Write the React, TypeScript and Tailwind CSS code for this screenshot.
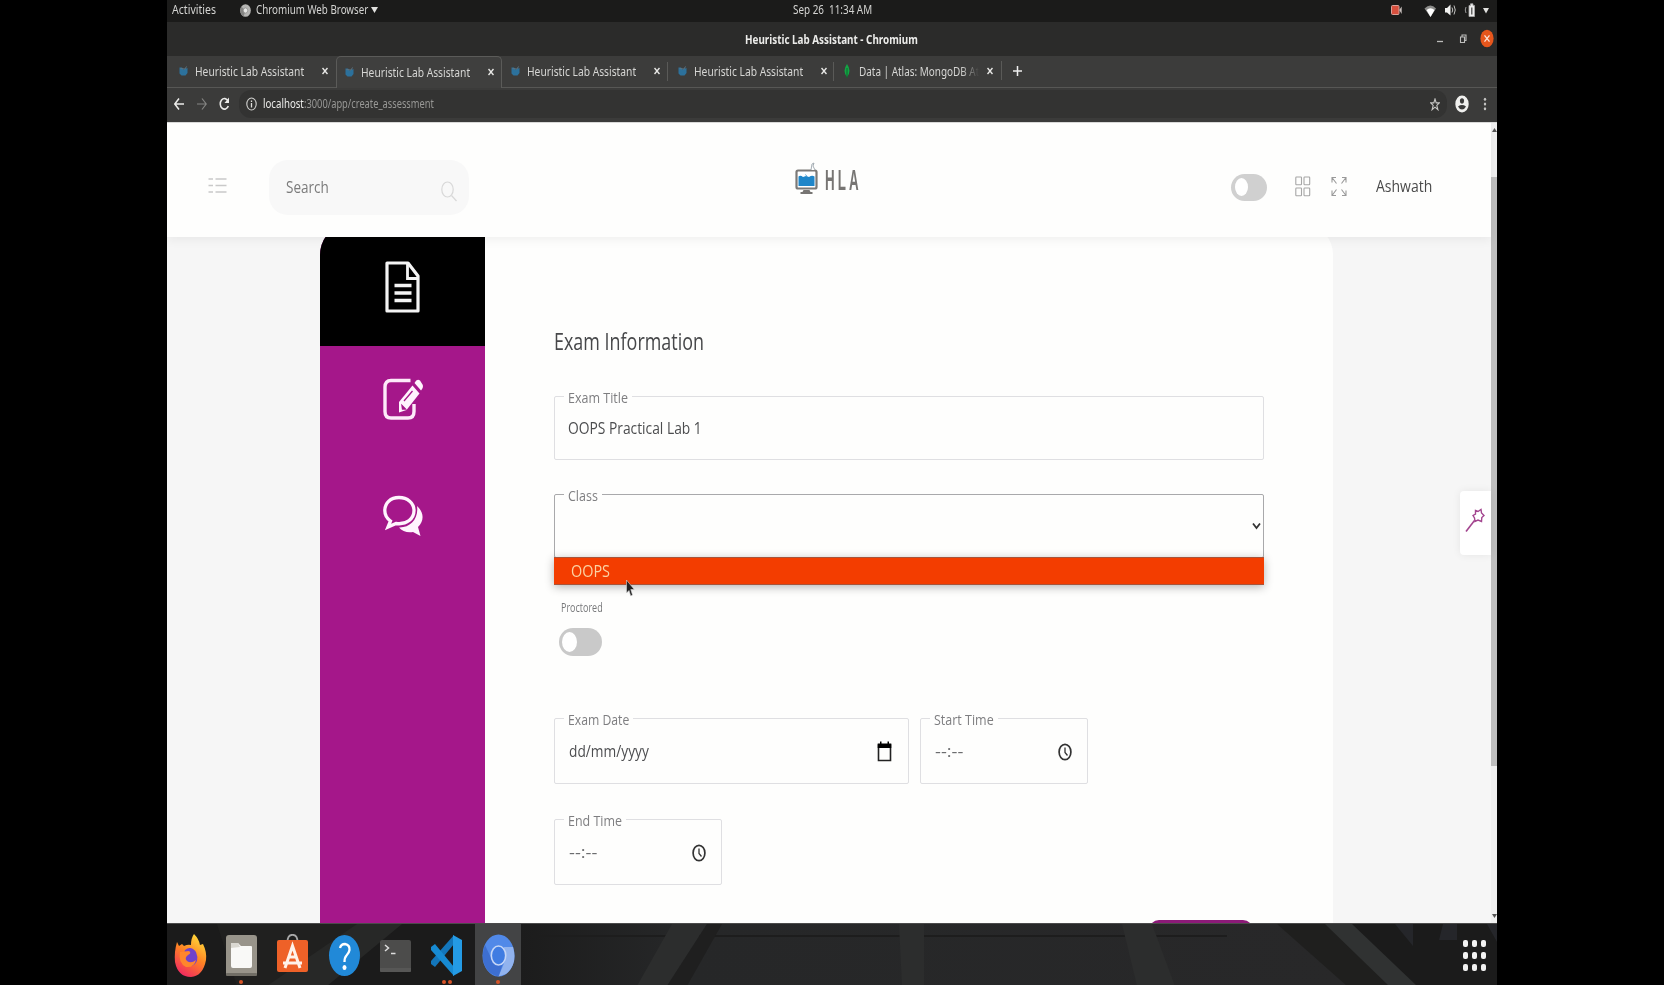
import { useLayoutEffect, useRef, useState, type ReactNode } from "react";

/* Single line of text condensed horizontally so that it fills its box. */
function Fit({ children, className = "" }: { children: ReactNode; className?: string }) {
  const box = useRef<HTMLSpanElement>(null);
  const text = useRef<HTMLSpanElement>(null);
  const [scale, setScale] = useState(1);
  useLayoutEffect(() => {
    if (box.current && text.current) setScale(box.current.clientWidth / text.current.offsetWidth);
  }, []);
  return (
    <span ref={box} className={`block shrink-0 whitespace-nowrap ${className}`}>
      <span ref={text} className="inline-block origin-left whitespace-pre" style={{ transform: `scaleX(${scale})` }}>
        {children}
      </span>
    </span>
  );
}

function TopBar() {
  return (
    <div className="flex h-[22px] items-center bg-[#1b1b1a] pb-[2px] text-[12.5px] leading-5 text-[#d4d4d2]">
      <Fit className="ml-[5px] w-[44px]">Activities</Fit>
      <svg className="ml-[24px] h-[13px] w-[11px] shrink-0" viewBox="0 0 12 12" preserveAspectRatio="none">
        <circle cx="6" cy="6" r="5.8" fill="#b5b5b3" />
        <path d="M6 6 1.5 2.5A5.8 5.8 0 0 0 4 11.4Z" fill="#858583" />
        <circle cx="6" cy="6" r="2.4" fill="#e8e8e6" stroke="#8b8b89" strokeWidth=".7" />
      </svg>
      <Fit className="ml-[5px] w-[112px]">Chromium Web Browser</Fit>
      <svg className="ml-[3px] h-[6px] w-[7px]" viewBox="0 0 7 6"><path d="M0 0H7L3.5 6Z" fill="#e2e2e0" /></svg>
      <Fit className="ml-[415px] w-[79px]">Sep 26  11:34 AM</Fit>
      <svg className="ml-auto mr-[7px] h-[16px] w-[100px] shrink-0" viewBox="0 0 100 16">
        <rect x="1.500" y="3.5" width="7.5" height="9" rx="1" fill="#d8503e" stroke="#d9a39b" />
        <path d="M9.200 8 11.700 4.5V12Z" fill="#c9c0bd" />
        <path d="M34.5 6.5Q40.500 .5 46 6.500L40.500 15Z" fill="#8c8c8a" />
        <path d="M36.500 8Q40.500 4.500 44.500 8L40.500 15Z" fill="#fff" />
        <path d="M55 6H57L60.500 2.500V13.500L57 10.500H55Z" fill="#f2f2f0" />
        <path d="M62 5.500Q63.500 8 62 10.500M64 3.500Q66.500 8 64 12.500" fill="none" stroke="#c4c4c2" strokeWidth="1" />
        <path d="M76 5Q74.500 8 76 11" fill="none" stroke="#999" />
        <path d="M79 3.500H80.500V1.800H83V3.500H84.500V14.500H79Z" fill="#eee" stroke="#aaa" strokeWidth=".8" />
        <path d="M81.800 5.500V12.500" stroke="#444" strokeWidth="1.200" />
        <path d="M93 6H99L96 11.500Z" fill="#e2e2e0" />
      </svg>
    </div>
  );
}

function TitleBar() {
  return (
    <div className="flex h-[34px] items-center bg-[#2b2b2a] text-[13px] font-bold leading-5 text-[#ececea]">
      <Fit className="ml-[578px] w-[173px]">Heuristic Lab Assistant - Chromium</Fit>
      <svg className="ml-auto mr-[3px] h-[20px] w-[60px]" viewBox="0 0 60 20">
        <path d="M3 12.500H9" stroke="#bdbdbb" strokeWidth="1.300" />
        <path d="M26.500 8H30.500V13.500H26.500ZM28 7.500V6H32V11.500H31" fill="none" stroke="#bdbdbb" strokeWidth="1.100" />
        <ellipse cx="53" cy="9.500" rx="6.600" ry="8.800" fill="#e6561c" />
        <path d="M50.500 6.300 55.500 12.700M55.500 6.300 50.500 12.700" stroke="#fbe3d8" strokeWidth="1.300" />
      </svg>
    </div>
  );
}

function Flask() {
  return (
    <svg className="h-[12px] w-[9px] shrink-0" viewBox="0 0 9 12">
      <path d="M.500 2.500H3L4.500 4.500 7 3.500 8.500 3V8L6.500 10.500H2.500L.500 8.500Z" fill="#2c719c" />
      <path d="M1.500 3.500 6 4 7.500 1.500" fill="none" stroke="#5c7381" />
    </svg>
  );
}

function Cross() {
  return (
    <svg className="h-[8px] w-[6px] shrink-0" viewBox="0 0 6 8">
      <path d="M.500 1 5.500 7M5.500 1 .500 7" stroke="#e8e8e6" strokeWidth="1.400" />
    </svg>
  );
}

function Tab({ active, first, edge }: { active?: boolean; first?: boolean; edge?: boolean }) {
  return (
    <div
      className={`flex shrink-0 items-center border-t border-r pb-[2px] ${first ? "w-[168.500px]" : "w-[166.500px]"} ${
        active ? "h-[32px] rounded-t-[5px] border-l border-[#5b5b59] bg-[#3f3f3e]" : "h-[31px] border-transparent"
      }`}
    >
      <span className={`flex w-full items-center ${first ? "pl-[12px]" : active ? "pl-[8px]" : "pl-[9px]"}`}>
        <Flask />
        <Fit className="ml-[7px] w-[109px]">Heuristic Lab Assistant</Fit>
        <span className="ml-[18px]"><Cross /></span>
        {edge && <i className="ml-auto h-[19px] w-px bg-[#5a5a58]" />}
      </span>
    </div>
  );
}

function TabStrip() {
  return (
    <div className="flex h-[32px] items-stretch border-b border-[#575755] bg-[#3c3c3b] text-[13px] leading-5 text-[#d6d6d4]">
      <Tab first />
      <Tab active />
      <Tab edge />
      <Tab edge />
      <div className="flex items-center pb-[2px] pl-[9px]">
        <svg className="h-[14px] w-[6px]" viewBox="0 0 6 14"><path d="M3 0Q8 7 3 13Q-2 7 3 0Z" fill="#13a545" /><path d="M3 4V14" stroke="#0a6b2d" /></svg>
        <Fit className="ml-[9px] w-[120px] mask-r-from-85%">Data | Atlas: MongoDB At</Fit>
        <span className="ml-[8px]"><Cross /></span>
        <i className="ml-[8px] h-[19px] w-px bg-[#5a5a58]" />
        <svg className="ml-[11px] h-[10px] w-[9px]" viewBox="0 0 9 10"><path d="M0 5H9M4.500 0V10" stroke="#eee" strokeWidth="1.500" /></svg>
      </div>
    </div>
  );
}

function AddressBar() {
  return (
    <div className="flex h-[34px] items-center bg-[#3b3b3a] pb-[2px] text-[12.500px] leading-5">
      <svg className="ml-[7px] h-[14px] w-[58px] shrink-0" viewBox="0 0 58 14" fill="none">
        <path d="M10 7H1M5 1.500 .800 7 5 12.500" stroke="#ececea" strokeWidth="1.500" />
        <path d="M23 7H32M28 1.500 32.200 7 28 12.500" stroke="#858583" strokeWidth="1.200" />
        <path d="M54 4A4.200 5.300 0 1 0 54.300 9" stroke="#ececea" strokeWidth="1.600" />
        <path d="M55 .500V6H50.500Z" fill="#ececea" />
      </svg>
      <div className="ml-[7px] flex h-[28px] w-[1208px] shrink-0 items-center rounded-[12px] bg-[#333332]">
        <svg className="ml-[7px] h-[14px] w-[11px]" viewBox="0 0 11 14" fill="none">
          <ellipse cx="5.500" cy="7" rx="4.700" ry="6" stroke="#d0d0ce" strokeWidth="1.100" />
          <path d="M5.500 6V10.500M5.500 3.500V5" stroke="#e0e0de" strokeWidth="1.300" />
        </svg>
        <Fit className="ml-[6px] w-[41px] text-[#ececea]">localhost</Fit>
        <Fit className="w-[130px] text-[#989896]">:3000/app/create_assessment</Fit>
        <svg className="ml-auto mr-[7px] h-[13px] w-[10px]" viewBox="0 0 10 13" fill="none">
          <path d="M5 1 6.200 4.900H9.300L6.800 7.400 7.900 11.700 5 9.200 2.100 11.700 3.200 7.400 .700 4.900H3.800Z" stroke="#c8c8c6" strokeWidth="1.100" />
        </svg>
      </div>
      <svg className="ml-[8px] h-[18px] w-[14px]" viewBox="0 0 14 18">
        <ellipse cx="7" cy="9" rx="6.700" ry="8.500" fill="#f0f0ee" />
        <ellipse cx="7" cy="6" rx="2.100" ry="2.700" fill="#3b3b3a" />
        <path d="M3 11.500Q7 8.700 11 11.500Q9.500 14.500 7 14.500T3 11.500Z" fill="#3b3b3a" />
      </svg>
      <svg className="ml-[14px] h-[14px] w-[4px]" viewBox="0 0 4 14" fill="#c4c4c2">
        <ellipse cx="2" cy="2.200" rx="1.200" ry="1.500" /><ellipse cx="2" cy="7" rx="1.200" ry="1.500" /><ellipse cx="2" cy="11.800" rx="1.200" ry="1.500" />
      </svg>
    </div>
  );
}

function Header() {
  return (
    <header className="relative z-10 flex h-[114px] shrink-0 items-center bg-[#fefefd] text-[#4a4a4a] shadow-[0_3px_10px_rgba(0,0,0,0.06)]">
      <svg className="ml-[41px] mt-[12px] h-[18px] w-[19px]" viewBox="0 0 19 18" stroke="#c9c9c9" strokeWidth="1.500">
        <path d="M.500 2H5M7.500 2H18.500M.500 8.500H5M7.500 8.500H18.500M.500 15H5M7.500 15H18.500" />
      </svg>
      <div className="ml-[42px] mt-[24px] mb-[10px] flex h-[55px] w-[200px] items-center rounded-[19px] bg-[#f8f8f8]">
        <Fit className="ml-[17px] mb-[1px] w-[43px] text-[17px] leading-6 text-[#7b7b7b]">Search</Fit>
        <svg className="ml-auto mr-[12px] mt-[9px] h-[21px] w-[16px]" viewBox="0 0 16 21" fill="none" stroke="#d8d8d8" strokeWidth="1.200">
          <ellipse cx="6.500" cy="8.500" rx="5.700" ry="7.500" /><path d="M10.500 14.500 15.500 20" />
        </svg>
      </div>
      <div className="ml-[326px] mb-[3px] flex items-center">
        <svg className="h-[34px] w-[24px]" viewBox="0 0 24 34">
          <rect x="1.500" y="8.500" width="20" height="18" rx="1.500" fill="#fff" stroke="#7b7977" strokeWidth="2.200" />
          <path d="M3.500 14.500Q5.500 13 8 15L11 14 14 15Q17 13 19.500 14.500V24H3.500Z" fill="#1f86c9" />
          <path d="M10.500 12.500 12 14.500" stroke="#55a5d6" />
          <path d="M8.500 28H14.500L15.500 30H17.500V32H5.500V30H7.500Z" fill="#777573" />
          <path d="M16 8 17 2 19 1 18 4 20 8" fill="#fff" stroke="#9ba5ab" strokeWidth=".900" />
        </svg>
        <Fit className="ml-[6px] mt-[3px] w-[37px] font-['Liberation_Sans'] text-[30px] font-bold leading-[28px] tracking-[7px] text-[#777573]">HLA</Fit>
      </div>
      <div className="ml-[369px] mt-[14px] flex h-[27px] w-[36px] items-center rounded-[14px] bg-[#d0d0d0] pl-[4px]">
        <span className="h-[18px] w-[13px] rounded-[50%] bg-white" />
      </div>
      <svg className="ml-[28px] mt-[13px] h-[21px] w-[16px]" viewBox="0 0 16 21" fill="none" stroke="#a6a6a6" strokeWidth="1.100">
        <rect x=".800" y="1" width="5.700" height="7.800" rx=".700" /><rect x="9" y="1" width="5.700" height="7.800" rx=".700" />
        <rect x=".800" y="12" width="5.700" height="7.800" rx=".700" /><rect x="9" y="12" width="5.700" height="7.800" rx=".700" />
      </svg>
      <svg className="ml-[20px] mt-[13px] h-[21px] w-[16px]" viewBox="0 0 16 21" fill="none" stroke="#9a9a9a" strokeWidth="1.100">
        <path d="M1 6.500V1.500H5M1 1.500 5.500 7.500M11 1.500H15V6.500M15 1.500 10.500 7.500M1 14.500V19.500H5M1 19.500 5.500 13.500M11 19.500H15V14.500M15 19.500 10.500 13.500" />
      </svg>
      <Fit className="ml-[29px] mt-[12px] w-[56px] text-[17px] leading-6">Ashwath</Fit>
    </header>
  );
}

function Sidebar() {
  return (
    <nav className="flex w-[165px] shrink-0 flex-col overflow-hidden bg-[#a5178a]">
      <div className="flex h-[117px] shrink-0 justify-center bg-black pt-[32px]">
        <svg className="h-[52px] w-[35px]" viewBox="0 0 35 52" fill="none" stroke="#f4f4f4">
          <path d="M2 2H23L33 15V50H2Z" strokeWidth="3.200" strokeLinejoin="round" />
          <path d="M22.500 2V17.500H33" strokeWidth="2.800" />
          <path d="M9.500 24.500H26.500M9.500 32H26.500M9.500 39.500H26.500" strokeWidth="3.400" />
        </svg>
      </div>
      <div className="flex h-[109px] shrink-0 justify-center pt-[31px]">
        <svg className="h-[44px] w-[42px]" viewBox="0 0 42 44">
          <path d="M28.500 3.500H9Q3 3.500 3 10V34.500Q3 41 9 41H26Q32 41 32 34.500V27" fill="none" stroke="#fdeaf9" strokeWidth="3.400" />
          <path d="M17 35.500V25L30.500 8.500 37.500 16.500 24.500 33Z" fill="#fff4fd" />
          <path d="M32.500 6Q35 1 38 3.500L40.500 7.500Q42 10 39 13.500Z" fill="#fff4fd" />
          <path d="M22 24 30.500 14M20 28.500 23.500 32 20.500 32Z" stroke="#a5178a" strokeWidth="1.300" fill="#a5178a" />
        </svg>
      </div>
      <div className="flex h-[110px] shrink-0 justify-center pt-[39px]">
        <svg className="h-[43px] w-[42px]" viewBox="0 0 42 43">
          <path d="M17 3.500C8.500 3.500 2.800 9 2.800 16.500 2.800 21 5 24.500 8.500 27L6 33 14 29.500C25 31 32 24.500 32 16.500 32 9 25.500 3.500 17 3.500Z" fill="none" stroke="#fff4fd" strokeWidth="3.300" />
          <path d="M35 12C42 18 42.500 27 36 33L38.500 42 31 38C25 39 20 37 17 33.500 28 34 37 25 35 12Z" fill="#fff4fd" />
        </svg>
      </div>
    </nav>
  );
}

function Field({ label, labelClass, className, dark, children }: { label: string; labelClass: string; className: string; dark?: boolean; children?: ReactNode }) {
  return (
    <div className={`relative flex shrink-0 rounded-[2px] border ${dark ? "border-[#a9a9ab]" : "border-[#dfdfe2]"} ${className}`}>
      <span className="absolute -top-[11px] left-[9px] bg-[#fefefd] px-[4px]">
        <Fit className={`text-[15px] leading-[22px] text-[#7e7e80] ${labelClass}`}>{label}</Fit>
      </span>
      {children}
    </div>
  );
}

function Clock() {
  return (
    <svg className="ml-auto mr-[15px] mt-[1px] h-[18px] w-[14px]" viewBox="0 0 14 18" fill="none" stroke="#333">
      <ellipse cx="7" cy="9" rx="5.900" ry="7.700" strokeWidth="1.700" /><path d="M7 4.500V9.500L9.500 12.500" strokeWidth="1.300" />
    </svg>
  );
}

function Form() {
  return (
    <section className="relative w-[848px] shrink-0 pl-[69px] pt-[95px]">
      <Fit className="w-[150px] text-[24.500px] leading-[34px] text-[#47484a]">Exam Information</Fit>
      <Field label="Exam Title" labelClass="w-[60px]" className="mt-[38px] h-[64px] w-[710px] items-center pl-[13px]">
        <Fit className="mb-[1px] w-[134px] text-[17px] leading-6 text-[#4c4d4f]">OOPS Practical Lab 1</Fit>
      </Field>
      <Field dark label="Class" labelClass="w-[30px]" className="mt-[34px] h-[64px] w-[710px] items-center justify-end pr-[2px]">
        <svg className="h-[8px] w-[9px]" viewBox="0 0 9 8" fill="none"><path d="M1 1.500 4.500 6 8 1.500" stroke="#333" strokeWidth="1.800" /></svg>
      </Field>
      <div className="relative -mt-[1px] flex h-[28px] w-[710px] items-center border-t border-b border-[#a8543a] bg-[#f33d00] pl-[17px] shadow-[0_2px_10px_rgba(0,0,0,0.3)]">
        <Fit className="w-[39px] text-[17px] leading-6 text-[#fbd3a4]">OOPS</Fit>
        <svg className="absolute left-[72px] top-[21px] h-[19px] w-[9px]" viewBox="0 0 9 19">
          <path d="M.500 1V14L3 11.500 4.700 17 6.500 16 4.800 10.500 8.300 10.500Z" fill="#222" stroke="#d8d8d8" strokeWidth=".600" />
        </svg>
      </div>
      <Fit className="ml-[7px] mt-[13px] w-[42px] text-[12px] leading-5 text-[#77787a]">Proctored</Fit>
      <div className="ml-[5px] mt-[10px] flex h-[28px] w-[43px] items-center rounded-[14px] bg-[#c9c9c9] pl-[3px]">
        <span className="h-[20px] w-[15px] rounded-[50%] bg-white" />
      </div>
      <div className="mt-[62px] flex gap-[11px]">
        <Field label="Exam Date" labelClass="w-[61px]" className="h-[66px] w-[355px] items-center pl-[14px]">
          <Fit className="mb-[1px] w-[80px] text-[17px] leading-6 text-[#4c4d4f]">dd/mm/yyyy</Fit>
          <svg className="ml-auto mr-[16px] h-[21px] w-[15px]" viewBox="0 0 15 21">
            <path d="M1.500 4H13.500V19.500H1.500Z" fill="none" stroke="#222" strokeWidth="1.600" />
            <path d="M.700 2.500H3V.500H4.500V2.500H10.500V.500H12V2.500H14.300V7H.700Z" fill="#000" />
          </svg>
        </Field>
        <Field label="Start Time" labelClass="w-[60px]" className="h-[66px] w-[168px] items-center pl-[14px]">
          <Fit className="w-[28px] text-[17px] leading-6 text-[#6c6d6f]">--:--</Fit>
          <Clock />
        </Field>
      </div>
      <Field label="End Time" labelClass="w-[54px]" className="mt-[35px] h-[66px] w-[168px] items-center pl-[14px]">
        <Fit className="w-[28px] text-[17px] leading-6 text-[#6c6d6f]">--:--</Fit>
        <Clock />
      </Field>
      <div className="ml-[595px] mt-[35px] h-[40px] w-[104px] rounded-[10px] bg-[#8c1a78]" />
    </section>
  );
}

function Page() {
  return (
    <div className="flex h-[801px] shrink-0 overflow-hidden border-t border-[#d9d9d8] bg-[#f6f6f6] font-['Open_Sans',sans-serif]">
      <div className="relative flex w-[1324px] shrink-0 flex-col">
        <Header />
        <main className="-mt-[8px] ml-[153px] flex h-[695px] w-[1013px] shrink-0 overflow-hidden rounded-t-[20px_26px] bg-[#fefefd] [border-top-left-radius:20px_26px] [border-top-right-radius:20px_26px]">
          <Sidebar />
          <Form />
        </main>
        <div className="absolute right-0 top-[368px] flex h-[64px] w-[31px] items-center rounded-l-[4px] bg-white pl-[5px] shadow-[0_0_8px_rgba(0,0,0,0.07)]">
          <svg className="mb-[6px] h-[25px] w-[20px]" viewBox="0 0 20 25" fill="none" stroke="#a3458f">
            <path d="M10.500 2.500 13 3.500 16 1.500 16.500 5 19 7.500 16.800 9.500 16.500 13.500 13 12 10 13.500 9.500 10 8 7.500 10.500 6Z" strokeWidth="1.400" />
            <path d="M9.500 12.500 1 23.500" strokeWidth="1.600" />
          </svg>
        </div>
      </div>
      <div className="flex w-[6px] flex-col items-end justify-between bg-[#f0f0f0]">
        <svg className="mt-[5px] h-[4px] w-[5px] shrink-0" viewBox="0 0 5 4"><path d="M0 4 2.500 0 5 4Z" fill="#555" /></svg>
        <div className="mb-auto mt-[45px] h-[589px] w-[6px] bg-[#bebebe]" />
        <svg className="mb-[5px] h-[4px] w-[5px] shrink-0" viewBox="0 0 5 4"><path d="M0 0 2.500 4 5 0Z" fill="#555" /></svg>
      </div>
    </div>
  );
}

function AppSlot({ children, dots = 0, active }: { children: ReactNode; dots?: number; active?: boolean }) {
  return (
    <div className={`flex w-[46px] shrink-0 flex-col items-center ${active ? "bg-[#434445]" : ""}`}>
      <div className="flex h-[56px] items-center pb-[2px] pt-[8px]">{children}</div>
      <div className="flex gap-[2px]">
        {Array.from({ length: dots }, (_, i) => <i key={i} className="h-[4px] w-[4px] rounded-full bg-[#d75327]" />)}
      </div>
    </div>
  );
}

function Dock() {
  const icon = "h-[43px] w-[33px]";
  return (
    <footer className="relative flex h-[62px] shrink-0 overflow-hidden border-t border-[#4b4b4b] bg-[#1b1b1b]">
      <svg className="absolute inset-0 h-[62px] w-[1330px]" viewBox="0 0 1330 62">
        <defs>
          <linearGradient id="beam" x1="0" x2="1"><stop stopColor="#1b1b1b" /><stop offset=".2" stopColor="#262728" /><stop offset="1" stopColor="#282829" /></linearGradient>
        </defs>
        <path d="M50 0H190L130 62H70Z" fill="#20201f" />
        <path d="M190 0H235L160 62H100Z" fill="#272827" />
        <path d="M340 0H1120L1190 62H340Z" fill="url(#beam)" />
        <path d="M365 12H1060" stroke="#1d1d1d" strokeWidth="2" />
        <path d="M505 0H540L500 62H470Z" fill="#2c2d2d" />
        <path d="M540 0H555L520 62H500Z" fill="#1f1f1f" />
        <path d="M732 0H757V62H735Z" fill="#2c2d2d" />
        <path d="M955 0H985L1008 62H970Z" fill="#2c2d2d" />
        <path d="M1110 0H1160L1225 62H1180Z" fill="#1f1f1e" />
        <path d="M1158 0H1185L1250 62H1222Z" fill="#303232" />
        <path d="M1228 0H1246V22ZM1276 0H1290V16H1272ZM1320 0H1330V18Z" fill="#25262a" />
      </svg>
      <div className="relative flex flex-1 gap-[5.400px]">
        <AppSlot>
          <svg className={icon} viewBox="0 0 33 43">
            <defs><linearGradient id="fox" x1=".8" y1="0" x2=".3" y2="1"><stop stopColor="#ffe23c" /><stop offset=".5" stopColor="#ff8324" /><stop offset="1" stopColor="#f02861" /></linearGradient></defs>
            <path d="M20 0Q25 5 26 11L29 10Q33 18 32 26Q29 42 17 43Q4 43 1 28Q0 18 3 8L5 12 8 10 10 12Q14 10 17 11Q17 4 20 0Z" fill="url(#fox)" />
            <path d="M11 16Q17 11 22 18Q26 28 18 32Q10 32 9 23Z" fill="#7042c9" />
            <path d="M6 18 15 17Q18 19 14 21Q10 24 13 27Q17 30 22 26 20 34 12 33Q4 29 6 18Z" fill="#ff862c" />
          </svg>
        </AppSlot>
        <AppSlot dots={1}>
          <svg className={icon} viewBox="0 0 33 43">
            <rect x="1" y="1" width="31" height="41" rx="3" fill="#98948a" /><rect x="1" y="39" width="31" height="3" rx="1" fill="#716e66" />
            <path d="M6 10Q6 9 7 9H13L16 12H26Q27 12 27 13V32Q27 34 25 34H8Q6 34 6 32Z" fill="#f9f9f7" /><path d="M6 14V10Q6 9 7 9H13L15 13Z" fill="#dad8d1" />
          </svg>
        </AppSlot>
        <AppSlot>
          <svg className={icon} viewBox="0 0 33 43">
            <path d="M11.500 8Q11.500 .800 16.500 .800T21.500 8" fill="none" stroke="#a8a8a8" strokeWidth="1.800" />
            <rect x="1" y="6" width="31" height="32" rx="2" fill="#ee6128" />
            <path d="M9 34 16.500 12 24 34M12 23H21M7 29H26" fill="none" stroke="#fff2ea" strokeWidth="3" />
          </svg>
        </AppSlot>
        <AppSlot>
          <svg className={icon} viewBox="0 0 33 43">
            <ellipse cx="16.500" cy="21.500" rx="15.500" ry="20.500" fill="#2189d8" />
            <path d="M12 14Q13 10 17 10Q22 11 21.500 16Q21 19 18.500 21.500 16.500 23.500 16.500 28" fill="none" stroke="#fff" strokeWidth="2.300" /><ellipse cx="16.500" cy="33.500" rx="2" ry="2.500" fill="#fff" />
          </svg>
        </AppSlot>
        <AppSlot>
          <svg className={icon} viewBox="0 0 33 43">
            <rect x="1" y="6" width="31" height="32" rx="2" fill="#4c4c4b" /><path d="M1 34H32V37Q32 38 31 38H2Q1 38 1 37Z" fill="#575756" />
            <path d="M6 11 9.500 14 6 17M12 19.500H16.500" fill="none" stroke="#ddd" strokeWidth="1.500" />
          </svg>
        </AppSlot>
        <AppSlot dots={2}>
          <svg className={icon} viewBox="0 0 33 43">
            <path d="M24 10 5 33 1 30V27L24 1Z" fill="#1376bb" /><path d="M24 33 5 10 1 13V16L24 42Z" fill="#178ad2" />
            <path d="M23 1 32 6V37L23 42Z" fill="#249be5" />
          </svg>
        </AppSlot>
        <AppSlot active dots={1}>
          <svg className={icon} viewBox="0 0 33 43">
            <ellipse cx="16.500" cy="21.500" rx="16" ry="21" fill="#5189e8" />
            <path d="M22 13H31Q36 30 24 40L16.500 42.500 23 27Z" fill="#91b3ee" />
            <path d="M3 11Q.200 18 1 26Q4 40 16.500 42.500L21 29 10 26Z" fill="#3d6fd1" />
            <ellipse cx="16.500" cy="21.500" rx="7.200" ry="9.500" fill="#3f7ce2" stroke="#c5d6f6" strokeWidth="1.600" />
          </svg>
        </AppSlot>
      </div>
      <div className="relative mr-[11px] mt-[16px] grid h-[31px] w-[23px] grid-cols-3 gap-x-[4px] gap-y-[5px]">
        {Array.from({ length: 9 }, (_, i) => <i key={i} className="rounded-[2px] bg-[#f1f1f1]" />)}
      </div>
    </footer>
  );
}

export default function App() {
  return (
    <div className="flex h-[985px] w-[1664px] justify-center overflow-hidden bg-black font-['Noto_Sans',sans-serif]">
      <div className="flex w-[1330px] flex-col">
        <TopBar />
        <TitleBar />
        <TabStrip />
        <AddressBar />
        <Page />
        <Dock />
      </div>
    </div>
  );
}
